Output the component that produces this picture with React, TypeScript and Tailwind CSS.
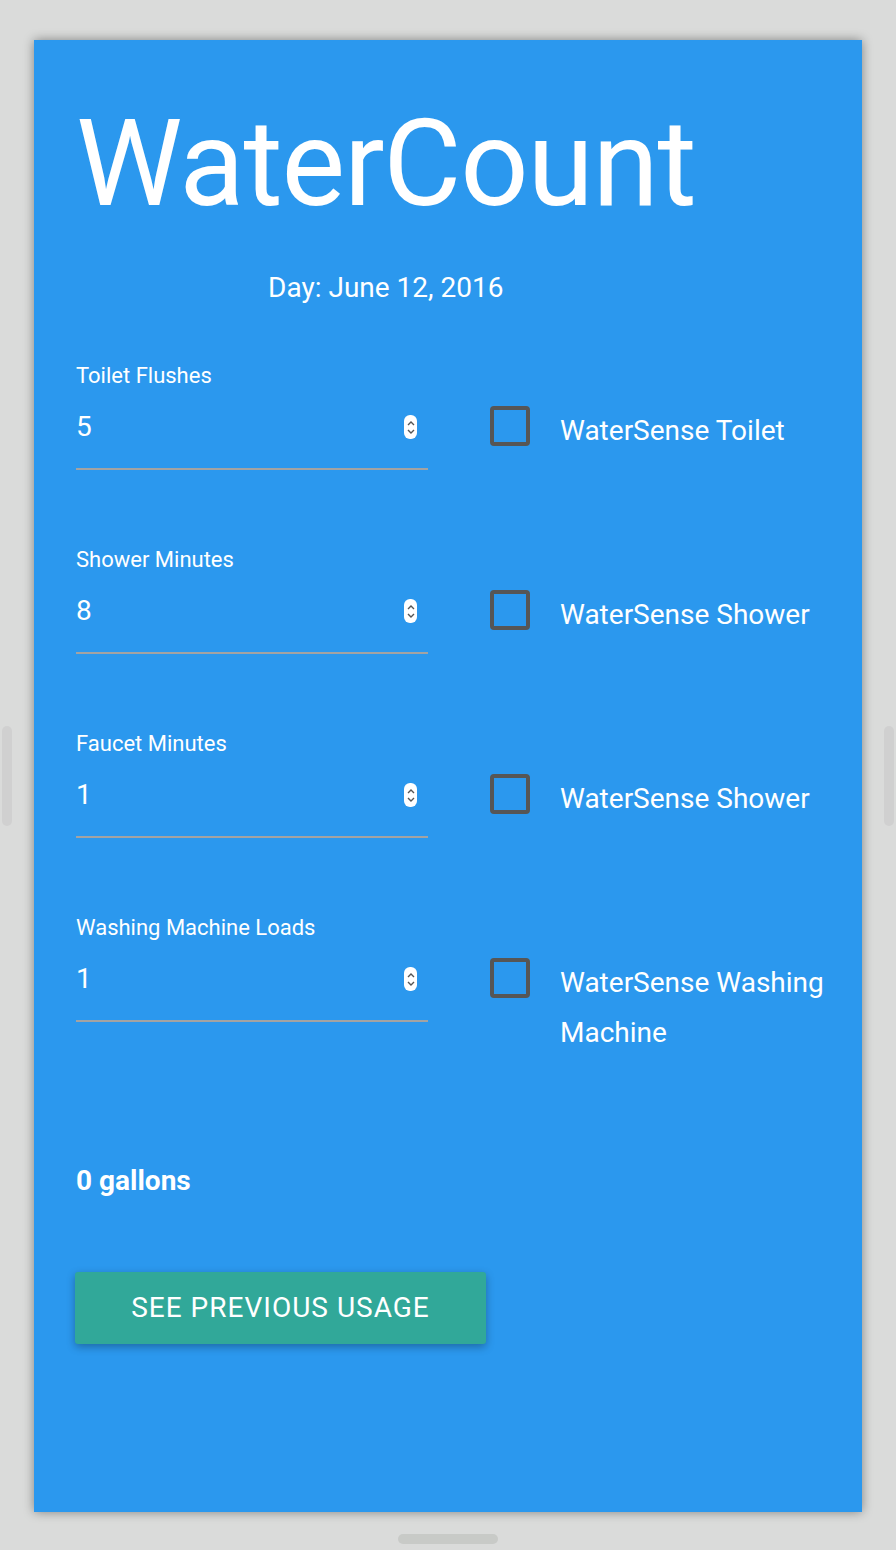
import React from "react";

type Row = { label: string; value: string; check: string };

const rows: Row[] = [
    { label: "Toilet Flushes", value: "5", check: "WaterSense Toilet" },
    { label: "Shower Minutes", value: "8", check: "WaterSense Shower" },
    { label: "Faucet Minutes", value: "1", check: "WaterSense Shower" },
    { label: "Washing Machine Loads", value: "1", check: "WaterSense Washing Machine" },
];

const Spinner = () => (
    <div className="w-[13px] h-[24px] bg-white rounded-[6px] flex flex-col items-center justify-center gap-[3px]">
        <svg width="8" height="5" viewBox="0 0 8 5">
            <path d="M1 4 L4 1 L7 4" fill="none" stroke="#555" strokeWidth="1.4" />
        </svg>
        <svg width="8" height="5" viewBox="0 0 8 5">
            <path d="M1 1 L4 4 L7 1" fill="none" stroke="#555" strokeWidth="1.4" />
        </svg>
    </div>
);

const UsageRow = ({ row }: { row: Row }) => (
    <div className="flex items-start">
        <div className="w-[352px] flex flex-col">
            <div className="text-[22px] leading-[26px] h-[26px]">{row.label}</div>
            <div className="h-[81px] flex items-start justify-between border-b-2 border-[#a3a3a3] pt-[23px]">
                <span className="text-[28px] leading-[30px]">{row.value}</span>
                <div className="mr-[11px] mt-[3px]">
                    <Spinner />
                </div>
            </div>
        </div>
        <div className="ml-[62px] mt-[43px] flex items-start">
            <div className="w-[40px] h-[40px] shrink-0 border-4 border-[#565656] rounded-[4px]" />
            <div className="ml-[30px] w-[275px] text-[28px] leading-[50px]">{row.check}</div>
        </div>
    </div>
);

export default function App() {
    return (
        <div
            className="w-[896px] h-[1550px] bg-[#dadbda] relative overflow-hidden"
            style={{ fontFamily: "Roboto, 'Liberation Sans', sans-serif" }}
        >
            <div className="absolute left-[2px] top-[726px] w-[10px] h-[100px] rounded-full bg-[#d0d0d0]" />
            <div className="absolute right-[2px] top-[726px] w-[10px] h-[100px] rounded-full bg-[#d0d0d0]" />
            <div className="absolute left-[398px] top-[1534px] w-[100px] h-[10px] rounded-full bg-[#c8cac7]" />

            <div className="ml-[34px] pt-[40px]">
                <div className="w-[828px] h-[1472px] bg-[#2b98ee] text-white pl-[42px] shadow-[0_0_10px_rgba(0,0,0,0.4)]">
                    <div className="inline-flex flex-col items-center pt-[54px]">
                        <h1 className="text-[120px] leading-[140px] font-normal tracking-[-1.2px]">WaterCount</h1>
                        <div className="text-[28px] leading-[36px] mt-[36px]">Day: June 12, 2016</div>
                    </div>
                    <div className="mt-[57px] flex flex-col gap-[77px]">
                        {rows.map((r, i) => (
                            <UsageRow key={i} row={r} />
                        ))}
                    </div>
                    <div className="mt-[103px] text-[28px] leading-[40px] font-bold">0 gallons</div>
                    <button className="mt-[71px] ml-[-1px] w-[411px] h-[72px] bg-[#31a899] rounded-[3px] text-white text-[28px] tracking-[1px] shadow-[0_3px_8px_rgba(0,0,0,0.3)]">
                        SEE PREVIOUS USAGE
                    </button>
                </div>
            </div>
        </div>
    );
}
